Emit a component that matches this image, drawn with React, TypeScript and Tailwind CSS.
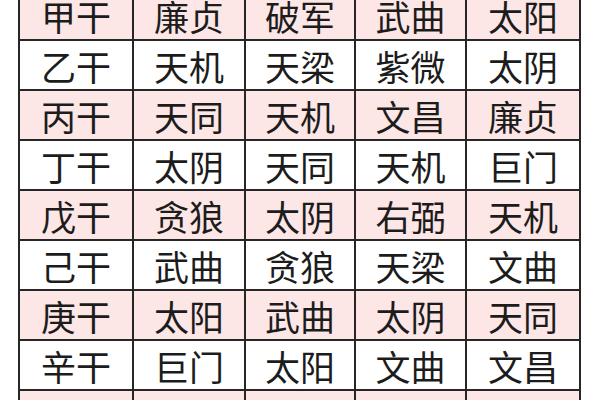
const rows: string[][] = [
  ["甲干", "廉贞", "破军", "武曲", "太阳"],
  ["乙干", "天机", "天梁", "紫微", "太阴"],
  ["丙干", "天同", "天机", "文昌", "廉贞"],
  ["丁干", "太阴", "天同", "天机", "巨门"],
  ["戊干", "贪狼", "太阴", "右弼", "天机"],
  ["己干", "武曲", "贪狼", "天梁", "文曲"],
  ["庚干", "太阳", "武曲", "太阴", "天同"],
  ["辛干", "巨门", "太阳", "文曲", "文昌"],
  ["壬干", "天梁", "紫微", "左辅", "武曲"],
];

export default function App() {
  return (
    <div className="w-[600px] h-[400px] overflow-hidden bg-white">
      <div
        className="ml-[18px] -mt-[11px] w-[563px] grid grid-cols-[112px_110px_108px_109px_112px] gap-[2px] p-[2px] bg-[#262626]"
        style={{ fontFamily: '"Noto Sans CJK SC", "Noto Sans", sans-serif' }}
      >
        {rows.map((row, i) =>
          row.map((cell, j) => (
            <div
              key={`${i}-${j}`}
              className={`h-[48px] flex items-center justify-center text-[35px] leading-none text-[#1c1c1c] ${
                i % 2 === 0 ? "bg-[#fce6e6]" : "bg-white"
              }`}
            >
              {cell}
            </div>
          ))
        )}
      </div>
    </div>
  );
}
